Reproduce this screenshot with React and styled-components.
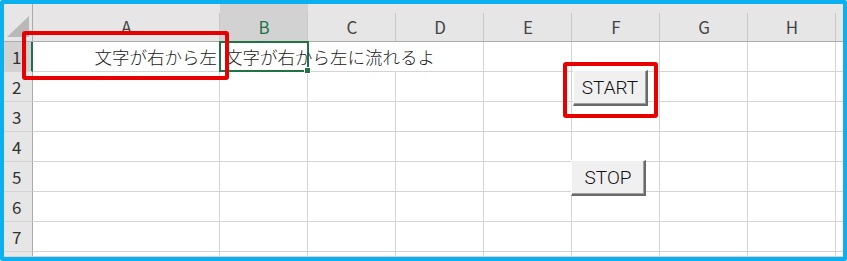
import React from "react";
import styled, { createGlobalStyle } from "styled-components";

const GlobalStyle = createGlobalStyle`
  html, body {
    margin: 0;
    padding: 0;
    background: #fff;
  }
`;

const COLS = ["A", "B", "C", "D", "E", "F", "G", "H"];
const ROWS = [1, 2, 3, 4, 5, 6, 7];

const Frame = styled.div`
  width: 847px;
  height: 261px;
  box-sizing: border-box;
  border: 4px solid #0cb0ef;
  border-radius: 2px;
  position: relative;
  overflow: hidden;
  background: #fff;
  display: flex;
  flex-direction: column;
  font-family: "Noto Sans CJK JP", "Noto Sans", sans-serif;
`;

const Sheet = styled.div`
  flex: 1;
  overflow: hidden;
  display: grid;
  grid-template-columns: 29px 187px repeat(7, 88px) 1fr;
  grid-template-rows: 38px repeat(8, 30px);
  border-bottom: 1px solid #d4d4d4;
`;

const Corner = styled.div`
  background: #e6e6e6;
  border-right: 1px solid #ababab;
  border-bottom: 1px solid #ababab;
  box-sizing: border-box;
  display: flex;
  align-items: flex-end;
  justify-content: flex-end;
  padding: 0 3px 4px 0;
`;

const ColHead = styled.div`
  position: relative;
  box-sizing: border-box;
  background: ${(p) => (p.$selected ? "#d2d2d2" : "#e6e6e6")};
  color: ${(p) => (p.$selected ? "#217346" : "#444")};
  border-bottom: 1px solid #ababab;
  display: flex;
  align-items: center;
  justify-content: center;
  padding-top: 8px;
  font-size: 17px;
  font-weight: 400;
  &::after {
    content: "";
    position: absolute;
    right: 0;
    top: 9px;
    bottom: 0;
    width: 1px;
    background: ${(p) => (p.$last ? "transparent" : "#c8c8c8")};
  }
`;

const RowHead = styled.div`
  box-sizing: border-box;
  background: ${(p) => (p.$selected ? "#d2d2d2" : "#e6e6e6")};
  color: #333;
  border-right: ${(p) => (p.$selected ? "2px solid #217346" : "1px solid #ababab")};
  border-bottom: 1px solid #d4d4d4;
  display: flex;
  align-items: center;
  padding-left: 8px;
  font-size: 17px;
  font-weight: 400;
`;

const Cell = styled.div`
  position: relative;
  box-sizing: border-box;
  border-right: 1px solid ${(p) => (p.$overflowed ? "transparent" : "#d4d4d4")};
  border-bottom: 1px solid #d4d4d4;
  display: flex;
  align-items: center;
  justify-content: ${(p) => (p.$align === "right" ? "flex-end" : "flex-start")};
  padding: 0 2px 0 5px;
  white-space: nowrap;
  overflow: visible;
  z-index: ${(p) => (p.$front ? 2 : 1)};
  font-size: 17.5px;
  font-weight: 300;
  color: #222;
`;

const CellText = styled.span`
  position: relative;
  z-index: 3;
`;

const Selection = styled.div`
  position: absolute;
  left: -1px;
  top: -1px;
  right: -2px;
  bottom: -1px;
  border: 2px solid #217346;
  pointer-events: none;
  &::after {
    content: "";
    position: absolute;
    right: -4px;
    bottom: -4px;
    width: 5px;
    height: 5px;
    background: #217346;
    border: 1px solid #fff;
  }
`;

const Callout = styled.div`
  position: absolute;
  box-sizing: border-box;
  left: ${(p) => p.$x}px;
  top: ${(p) => p.$y}px;
  width: ${(p) => p.$w}px;
  height: ${(p) => p.$h}px;
  border: 4px solid #e80000;
  border-radius: 3px;
  z-index: 6;
  pointer-events: none;
`;

const SheetButton = styled.button`
  position: absolute;
  box-sizing: border-box;
  left: ${(p) => p.$x}px;
  top: ${(p) => p.$y}px;
  width: ${(p) => p.$w}px;
  height: ${(p) => p.$h}px;
  background: #f0f0f0;
  border: none;
  border-top: 1px solid #fdfdfd;
  border-left: 1px solid #fdfdfd;
  border-right: 2px solid #6a6a6a;
  border-bottom: 2px solid #6a6a6a;
  box-shadow: inset -1px -1px 0 #a0a0a0;
  padding: 0 0 1px 0;
  font-family: "Roboto", "Liberation Sans", sans-serif;
  font-size: 19px;
  font-weight: 300;
  color: #111;
  z-index: 5;
  cursor: pointer;
`;

const cellContent = {
  A1: { text: "文字が右から左", align: "right" },
  B1: { text: "文字が右から左に流れるよ", align: "left" },
};

const overflowed = ["B1", "C1"];

const App = () => {
  return (
    <>
      <GlobalStyle />
      <Frame>
        <Sheet>
          <Corner>
            <svg width="22" height="21" viewBox="0 0 22 21">
              <polygon points="22,0 22,21 0,21" fill="#b9b9b9" />
            </svg>
          </Corner>
          {COLS.map((c) => (
            <ColHead key={c} $selected={c === "B"}>
              {c}
            </ColHead>
          ))}
          <ColHead $last />
          {ROWS.map((r) => (
            <React.Fragment key={r}>
              <RowHead $selected={r === 1}>{r}</RowHead>
              {COLS.map((c) => {
                const id = c + r;
                const content = cellContent[id];
                return (
                  <Cell
                    key={id}
                    $align={content?.align}
                    $overflowed={overflowed.includes(id)}
                    $front={id === "B1"}
                  >
                    {content && <CellText>{content.text}</CellText>}
                    {id === "B1" && <Selection />}
                  </Cell>
                );
              })}
              <Cell />
            </React.Fragment>
          ))}
          {/* partly visible row below 7 */}
          <RowHead />
          {COLS.map((c) => (
            <Cell key={c + "8"} />
          ))}
          <Cell />
        </Sheet>

        <SheetButton $x={569} $y={66} $w={75} $h={36}>
          START
        </SheetButton>
        <SheetButton $x={567} $y={156} $w={75} $h={36}>
          STOP
        </SheetButton>

        <Callout $x={18} $y={27} $w={207} $h={49} />
        <Callout $x={559} $y={58} $w={95} $h={56} />
      </Frame>
    </>
  );
};

export default App;
